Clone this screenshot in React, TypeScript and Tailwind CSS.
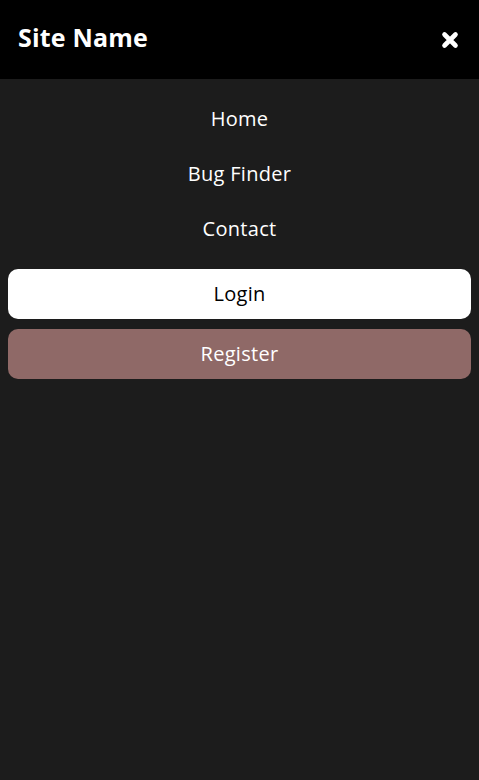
const links = ['Home', 'Bug Finder', 'Contact']

export default function App() {
  return (
    <div
      className="min-h-[780px] bg-[#1c1c1c] text-white"
      style={{ fontFamily: '"Open Sans", "Noto Sans", sans-serif' }}
    >
      <header className="flex h-[79px] items-center justify-between bg-black pl-[18px] pr-[20px]">
        <span className="pb-[3px] text-[25px] font-bold tracking-[0.2px]">Site Name</span>
        <button aria-label="Close menu" className="flex h-[18px] w-[18px] items-center justify-center">
          <svg viewBox="0 0 18 18" className="h-[18px] w-[18px]">
            <path
              d="M3.5 3.5 L14.5 14.5 M14.5 3.5 L3.5 14.5"
              stroke="white"
              strokeWidth="4.6"
              strokeLinecap="round"
              fill="none"
            />
          </svg>
        </button>
      </header>

      <nav className="flex flex-col pt-3">
        {links.map((l) => (
          <a key={l} href="#" className="flex h-[55px] items-center justify-center text-[20px] tracking-[0.3px]">
            {l}
          </a>
        ))}
      </nav>

      <div className="mt-[13px] flex flex-col gap-[10px] px-2">
        <button className="h-[50px] rounded-[10px] bg-white text-[20px] tracking-[0.3px] text-black">Login</button>
        <button className="h-[50px] rounded-[10px] bg-[#8f6967] text-[20px] tracking-[0.3px] text-white">
          Register
        </button>
      </div>
    </div>
  )
}
